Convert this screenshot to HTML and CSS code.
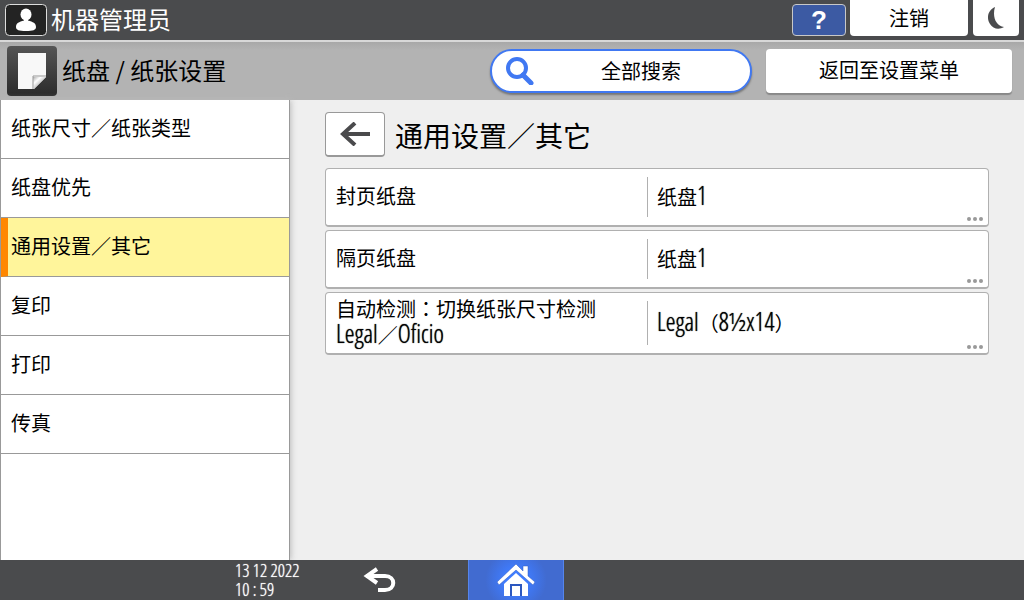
FILE: index.html
```html
<!DOCTYPE html>
<html lang="zh-CN">
    <head>
        <meta charset="UTF-8">
        <title>纸盘 / 纸张设置</title>
        <link rel="stylesheet" href="styles.css">
    </head>
    <body>
        <!-- Top bar -->
        <header class="topbar">
            <svg class="user-icon" viewBox="0 0 42 32">
                <rect x="0.5" y="0.5" width="41" height="31" rx="4" fill="#232323" stroke="#ddd"/>
                <ellipse cx="21" cy="10.500" rx="5.500" ry="6" fill="#fff"/>
                <path d="M11 23c0-4 3-5 8-6.500V14h4v2.500c5 1.500 8 2.500 8 6.500 0 3-3 4-10 4s-10-1-10-4z" fill="#fff"/>
            </svg>
            <span class="user-name">机器管理员</span>
            <button class="help">?</button>
            <button class="logout">注销</button>
            <button class="sleep" aria-label="睡眠">
                <svg width="16" height="22" viewBox="0 0 16 22"><path d="M7 0C0 3-2 11 2 17c3 5 9 6 14 3C8 19 4 10 7 0z" fill="#4a4b4d"/></svg>
            </button>
        </header>

        <!-- Page title -->
        <div class="titlebar">
            <svg class="paper-icon" viewBox="0 0 50 50">
                <defs>
                    <linearGradient id="tile" x2="0" y2="1"><stop offset="0" stop-color="#555"/><stop offset="1" stop-color="#2b2b2b"/></linearGradient>
                    <linearGradient id="fold" x2="1" y2="1"><stop offset="0" stop-color="#aaa"/><stop offset="0.3" stop-color="#fff"/><stop offset="0.6" stop-color="#bbb"/></linearGradient>
                </defs>
                <rect width="50" height="50" rx="4" fill="url(#tile)"/>
                <path d="M11 7h28v24L27 43H11z" fill="#f8f8f8"/>
                <path d="M26 31h13L27 43z" fill="url(#fold)"/>
                <path d="M26 43V30h13" fill="none" stroke="#999"/>
            </svg>
            <h1>纸盘 / 纸张设置</h1>
            <button class="search">
                <svg width="28" height="28" viewBox="0 0 28 28" fill="none" stroke="#4078f2"><circle cx="11" cy="11" r="9" stroke-width="4"/><path d="M17 18l8 8" stroke-width="5" stroke-linecap="round"/></svg>
                <span>全部搜索</span>
            </button>
            <button class="back-menu">返回至设置菜单</button>
        </div>

        <div class="main">
            <!-- Side menu -->
            <nav class="menu">
                <a href="#">纸张尺寸／纸张类型</a>
                <a href="#">纸盘优先</a>
                <a href="#" class="active">通用设置／其它</a>
                <a href="#">复印</a>
                <a href="#">打印</a>
                <a href="#">传真</a>
            </nav>

            <!-- Settings -->
            <main class="content">
                <div class="heading">
                    <button class="back" aria-label="返回">
                        <svg width="30" height="24" viewBox="0 0 30 24" fill="none" stroke="#4a4a4c" stroke-width="4"><path d="M3 12h27M15 1L3 12l12 11"/></svg>
                    </button>
                    <h2>通用设置／其它</h2>
                </div>
                <button class="setting">
                    <span class="name">封页纸盘</span>
                    <span class="value"><span>纸盘<span class="latin">1</span></span></span>
                    <span class="dots"><i></i><i></i><i></i></span>
                </button>
                <button class="setting">
                    <span class="name">隔页纸盘</span>
                    <span class="value"><span>纸盘<span class="latin">1</span></span></span>
                    <span class="dots"><i></i><i></i><i></i></span>
                </button>
                <button class="setting tall">
                    <span class="name">自动检测<span class="colon" lang="zh-TW">：</span>切换纸张尺寸检测<br><span class="latin">Legal</span>／<span class="latin">Oficio</span></span>
                    <span class="value"><span><span class="latin">Legal</span>（<span class="latin">8½x14</span>）</span></span>
                    <span class="dots"><i></i><i></i><i></i></span>
                </button>
            </main>
        </div>

        <!-- Bottom bar -->
        <footer class="bottombar">
            <div class="clock">
                <div>13 12 2022</div>
                <div>10 : 59</div>
            </div>
            <button class="return" aria-label="后退">
                <svg width="34" height="26" viewBox="0 0 34 26" fill="none" stroke="#fff" stroke-width="4"><path d="M14 2L4 9l10 7M4 9h18c11 0 11 14 0 14h-7"/></svg>
            </button>
            <button class="home" aria-label="主页">
                <svg width="38" height="32" viewBox="0 0 38 32"><path d="M19 9l12 11v12H7V20z" fill="#fff"/><path d="M14 32V21h10v11" fill="none" stroke="#2c58c0" stroke-width="2"/><path d="M19 0l7 7V2h5v10l7 6-2 3L19 6 2 21l-2-3z" fill="#fff" stroke="#2c58c0" stroke-width="0.500"/></svg>
            </button>
        </footer>
    </body>
</html>
```
FILE: styles.css
```css
*{
    box-sizing: border-box;
}
body{
    margin: 0;
    min-height: 100vh;
    display: flex;
    flex-direction: column;
    font-family: "Noto Sans CJK SC", sans-serif;
    font-size: 20px;
    line-height: 26px;
    color: #000;
    background-color: #efefef;
}
button{
    padding: 0;
    border: none;
    font: inherit;
    color: #000;
    background-color: #fff;
}
svg{
    display: block;
}
h1, h2{
    margin: 0;
    font-weight: 400;
}
.topbar{
    display: flex;
    align-items: flex-start;
    height: 42px;
    padding: 0 5px;
    background-color: #4a4b4d;
    border-bottom: 2px solid #d8d8d8;
}
.user-icon{
    width: 42px;
    height: 32px;
    margin-top: 4px;
}
.user-name{
    margin-left: 4px;
    font-size: 24px;
    line-height: 38px;
    color: #fff;
}
.help{
    width: 54px;
    height: 32px;
    margin: 4px 4px 0 auto;
    border: 1px solid #c8c8c8;
    border-radius: 4px;
    background-color: #3c5aa3;
    color: #fff;
    font-family: "Liberation Sans", sans-serif;
    font-size: 26px;
    font-weight: bold;
}
.logout{
    width: 118px;
    height: 36px;
    border-radius: 0 0 4px 4px;
}
.sleep{
    display: flex;
    justify-content: center;
    width: 46px;
    height: 36px;
    padding-top: 7px;
    margin-left: 5px;
    border-radius: 0 0 4px 4px;
}
.titlebar{
    display: flex;
    align-items: center;
    height: 58px;
    padding: 0 12px 0 7px;
    background: linear-gradient(#a8a8a8, #b3b3b3 8px);
}
.paper-icon{
    width: 50px;
    height: 50px;
}
.titlebar h1{
    padding-bottom: 2px;
    margin-left: 5px;
    font-size: 24px;
    line-height: 48px;
}
.search{
    display: flex;
    align-items: center;
    width: 262px;
    height: 44px;
    margin: 0 14px 0 auto;
    padding: 0 14px;
    border: 2px solid #4078f2;
    border-radius: 22px;
    box-shadow: 0 2px 2px #777;
}
.search span{
    flex: 1;
    padding-left: 12px;
}
.back-menu{
    width: 246px;
    height: 44px;
    padding-bottom: 2px;
    border-radius: 4px;
    box-shadow: 0 2px 1px #888;
}
.main{
    flex: 1;
    display: flex;
}
.menu{
    width: 290px;
    background-color: #fff;
    border: 1px solid #999;
    border-width: 0 1px;
    box-shadow: 1px 0 6px #bbb;
}
.menu a{
    display: flex;
    align-items: center;
    height: 59px;
    padding: 0 0 2px 10px;
    border-bottom: 1px solid #999;
    color: #000;
    text-decoration: none;
}
.menu .active{
    padding-left: 3px;
    border-left: 7px solid #ff8700;
    background-color: #fff59b;
}
.content{
    flex: 1;
    padding: 12px 35px;
}
.heading{
    display: flex;
    align-items: center;
    margin-bottom: 11px;
}
.heading h2{
    margin-left: 10px;
    font-size: 28px;
    line-height: 44px;
}
.back{
    display: flex;
    align-items: center;
    justify-content: center;
    width: 60px;
    height: 45px;
    border: 1px solid #999;
    border-bottom-width: 2px;
    border-radius: 4px;
}
.setting{
    position: relative;
    display: flex;
    align-items: center;
    width: 100%;
    height: 59px;
    margin-bottom: 3px;
    border: 1px solid #b0b0b0;
    border-bottom-width: 2px;
    border-radius: 4px;
    text-align: left;
}
.tall{
    height: 63px;
}
.name{
    width: 321px;
    padding: 0 0 2px 10px;
}
.colon{
    font-family: "Noto Sans CJK TC", sans-serif;
}
.value{
    display: flex;
    align-items: center;
    height: 40px;
    padding-left: 9px;
    border-left: 1px solid #b0b0b0;
}
.tall .value{
    height: 44px;
}
.latin, .clock{
    font-family: "Open Sans Condensed Light", "Roboto Condensed", Lato, sans-serif;
    line-height: 19px;
    text-shadow: 0 0 1px;
}
.latin{
    font-size: 25px;
}
.dots{
    position: absolute;
    right: 5px;
    bottom: 4px;
    display: flex;
    gap: 2px;
}
.dots i{
    width: 4px;
    height: 4px;
    border-radius: 2px;
    background-color: #999;
}
.bottombar{
    display: flex;
    height: 40px;
    background-color: #4a4b4d;
}
.clock{
    width: 128px;
    margin-left: 235px;
    padding-top: 1px;
    font-size: 18px;
    color: #fff;
}
.return{
    width: 105px;
    background-color: transparent;
}
.home{
    display: flex;
    align-items: center;
    justify-content: center;
    width: 96px;
    border: 1px solid #5585ec;
    border-width: 0 1px;
    background: radial-gradient(circle, #3f7cff 20%, #416bd0 60%);
}
```
